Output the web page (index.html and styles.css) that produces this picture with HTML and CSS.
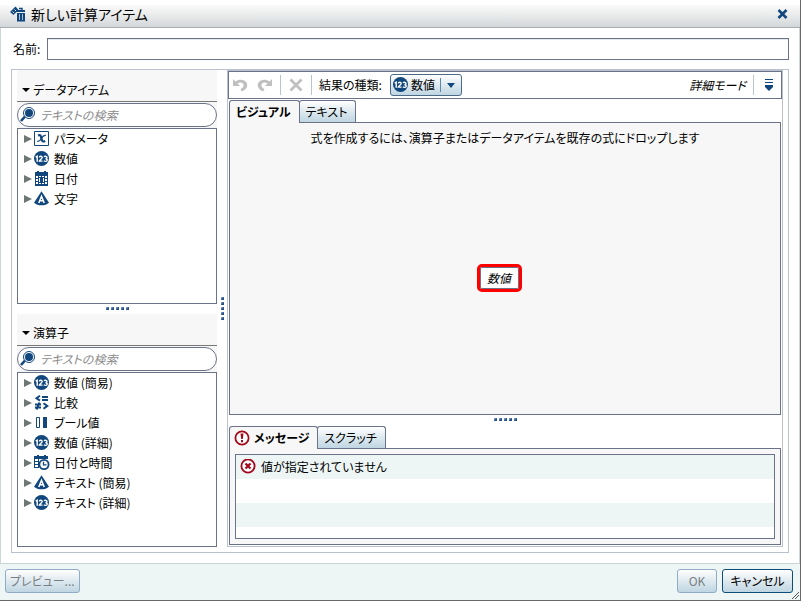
FILE: index.html
```html
<!DOCTYPE html>
<html lang="ja">
<head>
<meta charset="utf-8">
<title>新しい計算アイテム</title>
<link rel="stylesheet" href="styles.css">
</head>
<body>
<svg class="sprite" aria-hidden="true">
  <symbol id="i-num" viewBox="0 0 16 16">
    <circle cx="7.500" cy="7.500" r="7.500" fill="#11477c"/>
    <path d="M1.700 6.200l1.500-1v5.600M5.300 6.300c.3-1.500 3.100-1.300 2.900.3 0 1.200-2.600 2.300-2.900 3.500h3.200M10 5.800c1-.9 3.200-.4 3 .8-.1.900-.9 1.100-1.600 1.100 1 0 1.900.4 1.900 1.300 0 1.600-2.400 1.700-3.400.8" fill="none" stroke="#fff" stroke-width="1.400"/>
  </symbol>
  <symbol id="i-param" viewBox="0 0 16 16">
    <path d="M.5.500h14v14H.500z" fill="#fff" stroke="#11477c"/>
    <path d="M4 4.500c2.300-1 2.800-.2 3.300 2.500.6 3.200 1.500 4.200 3.900 3" fill="none" stroke="#11477c" stroke-width="2.200"/>
    <path d="M11.800 4.500c-2.200-.8-3.200 1-4.400 3C6.300 9.300 5.300 10.900 3.200 10.300" fill="none" stroke="#11477c" stroke-width="1.400"/>
  </symbol>
  <symbol id="i-date" viewBox="0 0 16 16">
    <path d="M1 1h2V0h2v1h5V0h2v1h2v14H1z" fill="#11477c"/>
    <path d="M2 5h2v2H2zM5 5h2v1H5zM8 5h2v1H8zM11 5h2v2h-2zM2 8h2v2H2zM11 8h2v2h-2zM2 11h2v2H2zM5 12h2v1H5zM8 12h2v1H8zM11 11h2v2h-2zM5 7h1v4H5zM9 7h1v4H9z" fill="#fff"/>
  </symbol>
  <symbol id="i-char" viewBox="0 0 16 16">
    <path d="M7.500.300L15 11.800c-3.500 3.400-11.500 3.400-15 0z" fill="#11477c"/>
    <path d="M4.800 12L7.500 5.300 10.200 12M5.700 9.800h3.600" fill="none" stroke="#fff" stroke-width="1.600"/>
  </symbol>
  <symbol id="i-cmp" viewBox="0 0 16 16">
    <path d="M6 .800L2.500 3.200 6 5.600M8 2h6M8 5h6M1 9.500h6M1 12.500h6M5.500 7.500l-3 7M9.500 8.200l3.800 2.700-3.800 2.800" fill="none" stroke="#11477c" stroke-width="2"/>
  </symbol>
  <symbol id="i-bool" viewBox="0 0 16 16">
    <path d="M2.500 2.500h3v10h-3z" fill="#fff" stroke="#11477c"/>
    <path d="M9 2h4v11H9z" fill="#11477c"/>
  </symbol>
  <symbol id="i-time" viewBox="0 0 16 16">
    <path d="M0 1h3V0h2v1h5V0h2v1h2v3H1v2h3v1H1v2h3v1H1v2h3v1H0zM4 4h1v9H4z" fill="#11477c"/>
    <circle cx="10" cy="9.500" r="4.600" fill="#fff" stroke="#11477c" stroke-width="1.800"/>
    <path d="M9.500 6.800v3h3" fill="none" stroke="#11477c" stroke-width="1.300"/>
  </symbol>
  <symbol id="i-search" viewBox="0 0 16 16">
    <path d="M5 9.500L1 14" stroke="#11477c" stroke-width="2.600"/>
    <circle cx="9" cy="6" r="5.500" fill="#fff" stroke="#11477c"/>
    <circle cx="9" cy="6" r="4" fill="#11477c"/>
  </symbol>
</svg>

<header class="titlebar">
  <svg class="icon" viewBox="0 0 16 16" aria-hidden="true">
    <path d="M0 6L5.500.500l3 3.500L3.500 9z" fill="#11477c"/>
    <path d="M2.500 5.500l1.700 1.700M4.500 3.500l1.700 1.700" stroke="#dfe6ee"/>
    <path d="M9 2.500h3v2" fill="none" stroke="#11477c" stroke-width="1.400"/>
    <path d="M6 4h9v2H6zM7 7h8v8.500H7z" fill="#11477c"/>
    <path d="M9.500 8v6M12.500 8v6" stroke="#a9bdd2"/>
  </svg>
  <h1>新しい計算アイテム</h1>
  <button class="plain close" aria-label="閉じる"><svg width="11" height="10" viewBox="0 0 11 10"><path d="M1.500 1l8 8M9.500 1l-8 8" stroke="#11477c" stroke-width="2.600"/></svg></button>
</header>

<main class="main">
  <div class="name-row">
    <label for="name">名前:</label>
    <input id="name" type="text">
  </div>

  <div class="workspace">
    <aside class="side">
      <section class="group">
        <h2><button class="plain head"><span class="down"></span>データアイテム</button></h2>
        <div class="search"><svg class="icon" aria-hidden="true"><use href="#i-search"/></svg><input type="search" aria-label="データアイテムの検索" placeholder="テキストの検索"></div>
        <ul class="tree">
          <li><button class="plain"><span class="right"></span><svg class="icon"><use href="#i-param"/></svg>パラメータ</button></li>
          <li><button class="plain"><span class="right"></span><svg class="icon"><use href="#i-num"/></svg>数値</button></li>
          <li><button class="plain"><span class="right"></span><svg class="icon"><use href="#i-date"/></svg>日付</button></li>
          <li><button class="plain"><span class="right"></span><svg class="icon"><use href="#i-char"/></svg>文字</button></li>
        </ul>
      </section>
      <div class="split"><i></i><i></i><i></i><i></i><i></i></div>
      <section class="group">
        <h2><button class="plain head"><span class="down"></span>演算子</button></h2>
        <div class="search"><svg class="icon" aria-hidden="true"><use href="#i-search"/></svg><input type="search" aria-label="演算子の検索" placeholder="テキストの検索"></div>
        <ul class="tree">
          <li><button class="plain"><span class="right"></span><svg class="icon"><use href="#i-num"/></svg>数値 (簡易)</button></li>
          <li><button class="plain"><span class="right"></span><svg class="icon"><use href="#i-cmp"/></svg>比較</button></li>
          <li><button class="plain"><span class="right"></span><svg class="icon"><use href="#i-bool"/></svg>ブール値</button></li>
          <li><button class="plain"><span class="right"></span><svg class="icon"><use href="#i-num"/></svg>数値 (詳細)</button></li>
          <li><button class="plain"><span class="right"></span><svg class="icon"><use href="#i-time"/></svg>日付と時間</button></li>
          <li><button class="plain"><span class="right"></span><svg class="icon"><use href="#i-char"/></svg>テキスト (簡易)</button></li>
          <li><button class="plain"><span class="right"></span><svg class="icon"><use href="#i-num"/></svg>テキスト (詳細)</button></li>
        </ul>
      </section>
    </aside>

    <div class="split vertical"><i></i><i></i><i></i><i></i><i></i></div>

    <div class="editor">
      <div class="toolbar">
        <button class="plain" aria-label="元に戻す" disabled><svg class="icon" viewBox="0 0 16 16"><path d="M1 2v7h7L5.500 6.500C8.500 4.500 12.300 6 11.500 9c-.4 1.500-1.500 2.300-3 3.300L10 14.500c3.500-1.500 6-4.500 5-7.700C13.700 2.500 7.500 1.500 3.500 4.500z" fill="#bfbfbf"/></svg></button>
        <button class="plain" aria-label="やり直し" disabled><svg class="icon" viewBox="0 0 16 16"><path d="M15 2v7H8l2.500-2.500C7.500 4.500 3.700 6 4.500 9c.4 1.500 1.500 2.300 3 3.300L6 14.500C2.500 13 0 10 1 6.800 2.300 2.500 8.500 1.500 12.500 4.500z" fill="#bfbfbf"/></svg></button>
        <span class="rule"></span>
        <button class="plain" aria-label="削除" disabled><svg class="icon" viewBox="0 0 16 16"><path d="M2.500 2.500l11 11M13.500 2.500l-11 11" stroke="#bfbfbf" stroke-width="2.800"/></svg></button>
        <span class="rule"></span>
        <label for="kind">結果の種類:</label>
        <div class="combo">
          <svg class="icon" aria-hidden="true"><use href="#i-num"/></svg>
          <select id="kind"><option>数値</option></select>
        </div>
        <button class="plain mode">詳細モード</button>
        <span class="rule"></span>
        <button class="plain menu" aria-label="メニュー"><svg width="10" height="12" viewBox="0 0 10 12"><path d="M1 0h8v1H1zM1 3h8v1H1zM1 6h8v2L5 12 1 8z" fill="#11477c"/></svg></button>
      </div>

      <div class="tabs" role="tablist">
        <button class="tab active" role="tab" aria-selected="true">ビジュアル</button>
        <button class="tab" role="tab" aria-selected="false">テキスト</button>
      </div>
      <section class="visual">
        <p>式を作成するには、演算子またはデータアイテムを既存の式にドロップします</p>
        <div class="canvas"><button class="drop">数値</button></div>
      </section>

      <div class="split"><i></i><i></i><i></i><i></i><i></i></div>

      <div class="tabs" role="tablist">
        <button class="tab active" role="tab" aria-selected="true"><svg class="icon" viewBox="0 0 16 16"><circle cx="8" cy="8" r="6.600" fill="#fff" stroke="#a3091b" stroke-width="1.800"/><path d="M6.500 3.500h3L8.800 9H7.200zM7 10h2v2.200H7z" fill="#a3091b"/></svg>メッセージ</button>
        <button class="tab" role="tab" aria-selected="false">スクラッチ</button>
      </div>
      <section class="messages">
        <ul>
          <li><svg class="icon" viewBox="0 0 16 16"><circle cx="8" cy="7" r="6.600" fill="#fff" stroke="#a3091b" stroke-width="1.800"/><path d="M5.500 4.500l5 5M10.500 4.500l-5 5" stroke="#a3091b" stroke-width="2.200"/></svg>値が指定されていません</li>
        </ul>
      </section>
    </div>
  </div>
</main>

<footer class="footer">
  <button class="btn preview" disabled>プレビュー...</button>
  <button class="btn ok" disabled>OK</button>
  <button class="btn primary">キャンセル</button>
  <svg class="grip" width="8" height="8" viewBox="0 0 8 8" aria-hidden="true"><path d="M1 8L8 1M4 8L8 4" stroke="#555"/></svg>
</footer>
</body>
</html>
```
FILE: styles.css
```css
* { box-sizing: border-box; }

:root {
  --line: #6b7388;
  --soft: #b9c1cd;
  --navy: #11477c;
}

body {
  margin: 0;
  height: 100vh;
  display: flex;
  flex-direction: column;
  padding-top: 5px;
  border-right: 1px solid #66686a;
  border-bottom: 1px solid #66686a;
  background: #fff;
  color: #000;
  font: 12px/16px "Noto Sans CJK JP", "Liberation Sans", sans-serif;
  font-feature-settings: "palt";
}

button, input, select {
  font: inherit;
  font-feature-settings: inherit;
  color: inherit;
}

h1, h2, p, ul { margin: 0; padding: 0; font: inherit; }
ul { list-style: none; }

.sprite { position: absolute; width: 0; height: 0; }
.icon { width: 16px; height: 16px; flex: none; display: block; }
.plain { border: 0; padding: 0; background: none; display: flex; align-items: center; }

.titlebar {
  height: 23px;
  flex: none;
  display: flex;
  align-items: center;
  gap: 5px;
  padding: 0 12px 4px 10px;
  background: linear-gradient(#fafafa, #eceded 40%, #d3d7da);
  border-bottom: 1px solid #a5acb2;
}
.titlebar h1 { font-size: 14px; font-weight: 400; }
.close { margin-left: auto; }

.main {
  flex: 1;
  min-height: 0;
  display: flex;
  flex-direction: column;
  gap: 9px;
  padding: 10px;
  border: solid #cdd6d8;
  border-width: 0 1px;
}

.name-row { display: flex; align-items: center; gap: 7px; padding-left: 2px; }
.name-row input {
  flex: 1;
  min-width: 0;
  height: 22px;
  padding: 0 4px;
  border: 1px solid var(--line);
  box-shadow: inset 0 1px #e4e7ec;
}

.workspace {
  flex: 1;
  min-height: 0;
  display: flex;
  padding: 0 5px 5px;
  border: 1px solid var(--soft);
}

.side { width: 200px; flex: none; display: flex; flex-direction: column; }
.group { flex: 1; display: flex; flex-direction: column; background: #f7f7f7; }
.group h2 { height: 32px; border-bottom: 1px solid #777; display: flex; padding: 8px 0 0 5px; }
.head { gap: 3px; }
.down { border: 4px solid transparent; border-top-color: #000; border-bottom: 0; }
.right { border: 4px solid transparent; border-left: 8px solid #6d7876; border-right: 0; }

.search {
  height: 24px;
  margin: 1px 0;
  display: flex;
  align-items: center;
  gap: 4px;
  padding: 0 12px 0 2px;
  border: 1px solid var(--line);
  border-radius: 12px;
  background: #fff;
}
.search input { flex: 1; min-width: 0; border: 0; padding: 0; background: none; outline: 0; }
.search input::placeholder { color: #8b8b8b; font-style: italic; opacity: 1; }

.tree { flex: 1; border: 1px solid var(--line); background: #fff; padding-left: 6px; }
.tree .plain { height: 20px; gap: 2px; }
.tree .icon { margin-right: 2px; }

.split { height: 10px; flex: none; display: flex; justify-content: center; align-items: center; gap: 2px; }
.split i { width: 3px; height: 3px; background: linear-gradient(135deg, #a8bcdb, #24508a 60%); }
.split.vertical { width: 10px; height: auto; flex-direction: column; }

.editor {
  flex: 1;
  min-width: 0;
  display: flex;
  flex-direction: column;
  border: 1px solid var(--soft);
  padding-bottom: 1px;
}

.toolbar {
  height: 28px;
  margin-bottom: 1px;
  display: flex;
  align-items: center;
  padding: 0 7px 0 3px;
  gap: 7px;
  border: 1px solid var(--line);
}
.toolbar .plain:nth-child(2) { margin-left: 2px; }
.rule { width: 1px; height: 20px; background: #b9c4cf; }

.combo, .tab, .btn {
  background: linear-gradient(#fff, #e4edf2 40%, #bfd6e2);
}
.combo {
  display: flex;
  align-items: center;
  height: 22px;
  width: 72px;
  margin-left: 1px;
  padding-left: 2px;
  border: 1px solid #4a6a88;
  border-radius: 3px;
  position: relative;
}
.combo select { flex: 1; align-self: stretch; min-width: 0; appearance: none; border: 0; background: none; padding: 0 0 0 2px; }
.combo::before { content: ""; position: absolute; right: 20px; top: 3px; bottom: 3px; border-left: 1px solid #5d87a5; pointer-events: none; }
.combo::after { content: ""; position: absolute; right: 6px; top: 8px; border: 4px solid transparent; border-top: 5px solid var(--navy); border-bottom: 0; pointer-events: none; }
.mode { margin-left: auto; font-style: italic; }
.menu { padding: 0 0 0 3px; }

.tabs { display: flex; padding: 0 1px; height: 22px; flex: none; }
.tab {
  display: flex;
  align-items: center;
  gap: 4px;
  padding: 0 8px;
  border: 1px solid var(--line);
  border-bottom: 0;
  border-radius: 3px 3px 0 0;
}
.tab + .tab { margin-left: -1px; padding: 0 8px 0 6px; }
.tab.active {
  position: relative;
  margin-bottom: -1px;
  padding: 0 8px 0 6px;
  background: #f7f7f7;
  font-weight: 700;
}
.tab.active .icon { margin-left: -2px; }

.visual {
  flex: 1;
  min-height: 0;
  display: flex;
  flex-direction: column;
  margin: 0 1px;
  border: 1px solid var(--line);
  background: #f7f7f7;
  text-align: center;
}
.visual p { padding-top: 7px; }
.canvas { flex: 1; display: flex; align-items: center; justify-content: center; padding-bottom: 4px; }
.drop {
  width: 45px;
  height: 28px;
  margin-right: 12px;
  padding: 0;
  border: 3px solid #f00;
  border-radius: 5px;
  background: #fff;
  box-shadow: inset 0 0 0 1px var(--line);
  font-style: italic;
}

.messages { margin: 0 1px; padding: 5px; border: 1px solid var(--line); background: #f7f7f7; }
.messages ul {
  height: 85px;
  border: 1px solid var(--line);
  background: repeating-linear-gradient(#edf5f5 0 24px, #fff 24px 48px);
}
.messages li { display: flex; align-items: center; gap: 5px; height: 24px; padding: 0 4px; }

.editor > .split { height: 11px; padding-bottom: 2px; }

.footer {
  height: 37px;
  flex: none;
  display: flex;
  align-items: flex-start;
  gap: 5px;
  padding: 5px 7px 0 5px;
  background: #edf5f5;
  border-top: 1px solid #cbd5d6;
  position: relative;
}
.btn {
  height: 24px;
  padding: 0 7px;
  border: 1px solid #7297b8;
  border-radius: 3px;
}
.btn:disabled { color: #7a7f83; border-color: #8fabc6; }
.preview { padding: 0 4px; }
.ok { margin-left: auto; width: 40px; }
.btn.primary { border-color: #0f4d79; min-width: 71px; }
.grip { position: absolute; right: 1px; bottom: 1px; }
```
